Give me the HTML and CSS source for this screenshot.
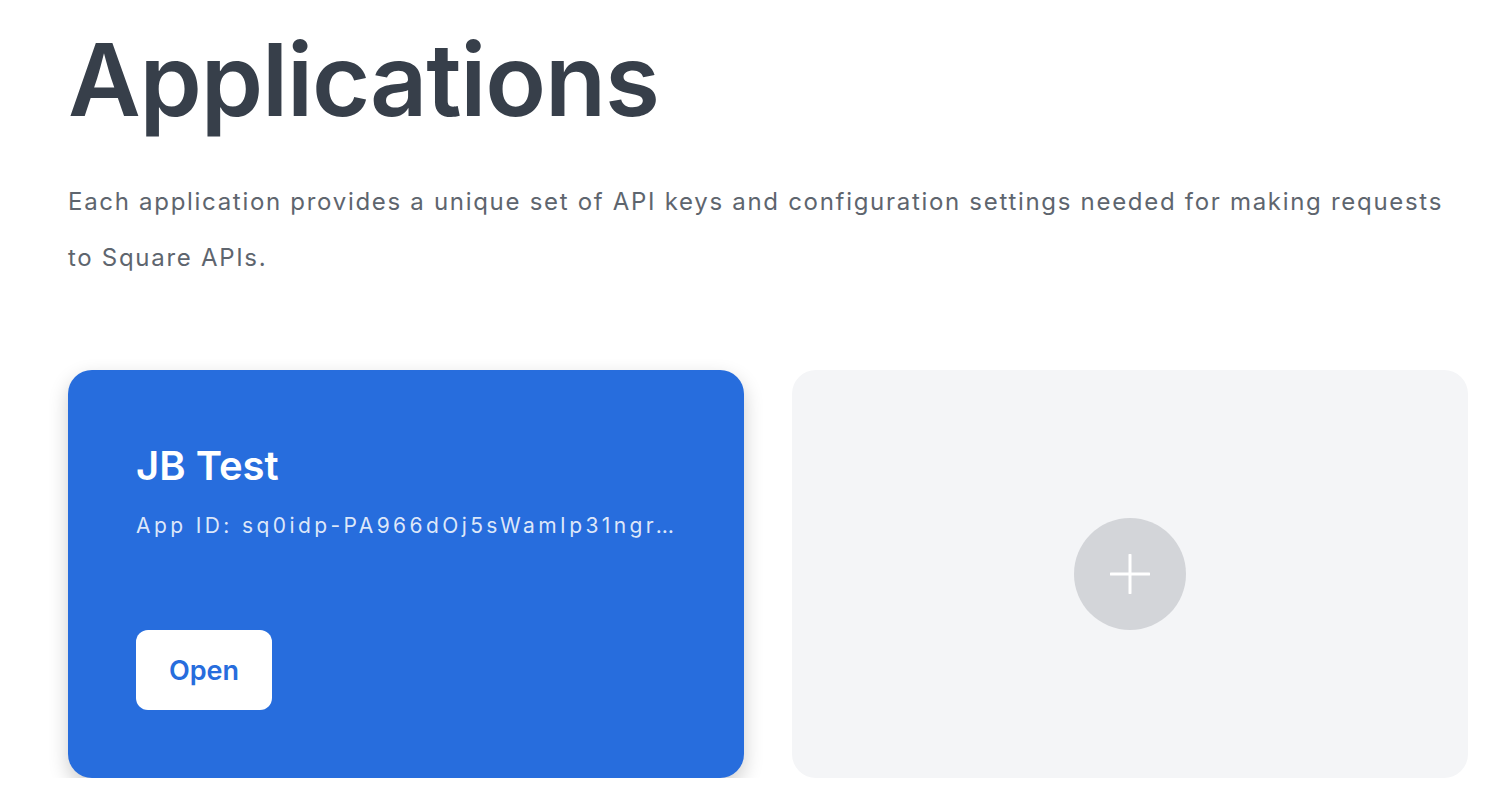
FILE: index.html
```html
<!DOCTYPE html>
<html>
<head>
<meta charset="utf-8">
<link rel="stylesheet" href="styles.css">
</head>
<body>
<main class="page">
  <h1 class="title">Applications</h1>
  <p class="desc">Each application provides a unique set of API keys and configuration settings needed for making requests to Square APIs.</p>
  <div class="grid">
    <div class="card app">
      <h2 class="app-name">JB Test</h2>
      <div class="app-id">App ID: sq0idp-PA966dOj5sWamIp31ngr…</div>
      <button class="open-btn">Open</button>
    </div>
    <div class="card add">
      <div class="add-circle">
        <svg width="40" height="40" viewBox="0 0 40 40"><path d="M20 1v38M1 20h38" stroke="#fff" stroke-width="3" stroke-linecap="round"/></svg>
      </div>
    </div>
  </div>
</main>
</body>
</html>
```
FILE: styles.css
```css
* { box-sizing: border-box; }
html, body { margin: 0; padding: 0; background: #fff; }
body { font-family: Inter, "Noto Sans", sans-serif; color: #373f4a; overflow: hidden; }
.page { padding: 20px 32px 0 68px; }
.title { margin: 0; font-size: 100px; font-weight: 600; line-height: 120px; letter-spacing: -1.2px; color: #373f4a; }
.desc { margin: 34px 0 0; font-size: 24px; line-height: 56px; color: #5e656e; font-weight: 400; letter-spacing: 1.7px; max-width: 1390px; }
.grid { display: grid; grid-template-columns: 676px 676px; gap: 48px; margin-top: 84px; }
.card { height: 408px; border-radius: 24px; }
.app { background: #276ddd; box-shadow: 0 8px 20px rgba(0,0,0,0.2); padding: 72px 68px 68px; display: flex; flex-direction: column; align-items: flex-start; }
.app-name { margin: 0; color: #fff; font-size: 40px; font-weight: 600; line-height: 48px; }
.app-id { margin-top: 22px; color: rgba(255,255,255,0.85); font-size: 21px; letter-spacing: 3.4px; line-height: 28px; white-space: nowrap; }
.open-btn { margin-top: auto; width: 136px; height: 80px; border: 0; border-radius: 12px; background: #fff; color: #276ddd; font-family: inherit; font-size: 27px; font-weight: 600; padding: 0; }
.add { background: #f4f5f7; display: flex; align-items: center; justify-content: center; }
.add-circle { width: 112px; height: 112px; border-radius: 50%; background: #d3d5d9; display: flex; align-items: center; justify-content: center; }
```
